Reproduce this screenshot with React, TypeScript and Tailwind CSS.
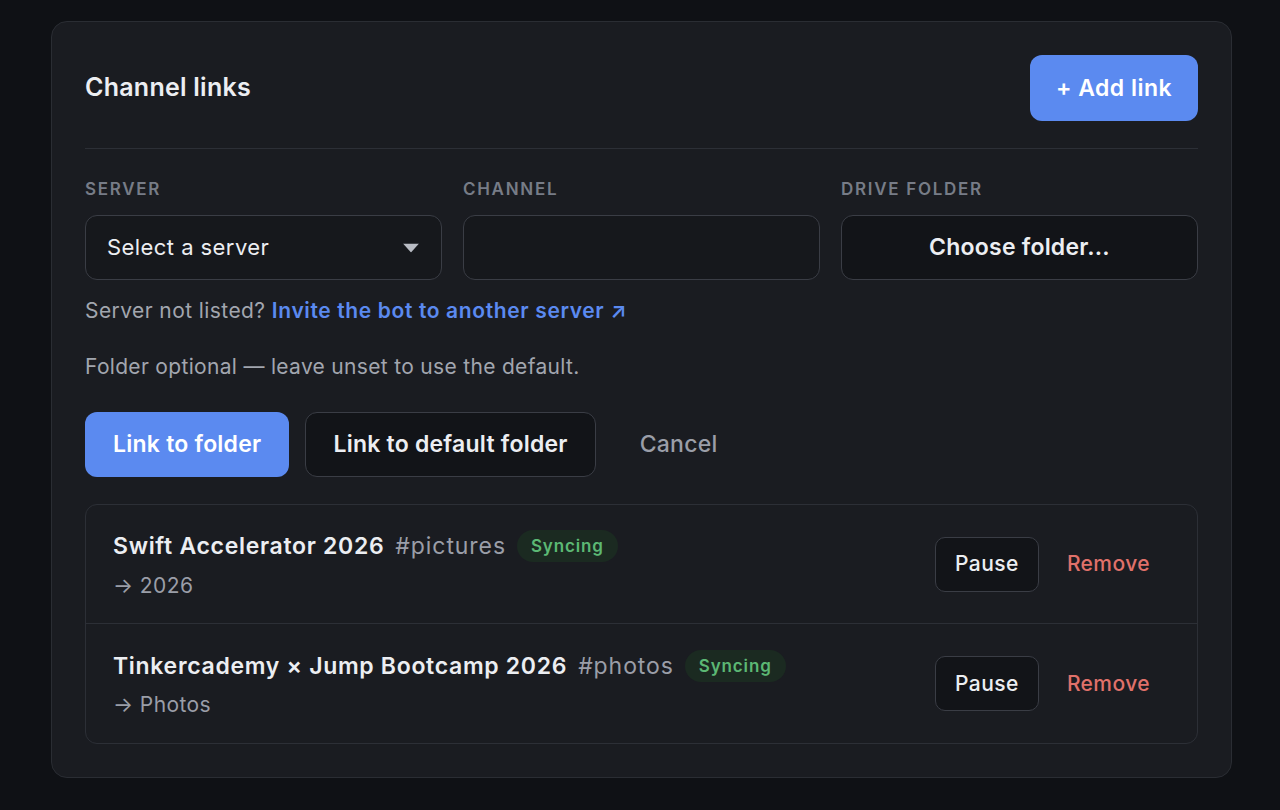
import { useState } from "react"

type Link = {
  server: string
  channel: string
  folder: string
}

const links: Link[] = [
  { server: "Swift Accelerator 2026", channel: "#pictures", folder: "2026" },
  { server: "Tinkercademy × Jump Bootcamp 2026", channel: "#photos", folder: "Photos" },
]

function Label({ children }: { children: React.ReactNode }) {
  return (
    <div className="mb-[17px] text-[17px] font-semibold uppercase leading-none tracking-[0.1em] text-[#777c87]">
      {children}
    </div>
  )
}

function LinkRow({ link, last }: { link: Link; last: boolean }) {
  return (
    <div
      className={`flex h-[119px] items-center justify-between pl-[27px] pr-[47px] ${
        last ? "" : "border-b border-[#2c2f36]"
      }`}
    >
      <div className="flex flex-col gap-[6px] pt-[2px]">
        <div className="flex items-center gap-[11px]">
          <span className="text-[23px] font-semibold tracking-[0.03em] text-[#eceef2]">{link.server}</span>
          <span className="text-[23px] tracking-[0.04em] text-[#9a9ea8]">{link.channel}</span>
          <span className="rounded-full bg-[#1b2a21] px-[14px] py-[5px] text-[17px] font-semibold leading-[22px] tracking-[0.05em] text-[#5cb874]">
            Syncing
          </span>
        </div>
        <div className="text-[21px] tracking-[0.02em] text-[#9a9ea8]">→ {link.folder}</div>
      </div>
      <div className="flex items-center gap-[28px]">
        <button className="h-[55px] w-[104px] rounded-[10px] border border-[#3a3d45] bg-[#121418] text-[21px] font-medium tracking-[0.02em] text-[#eceef2]">
          Pause
        </button>
        <button className="text-[21px] font-medium tracking-[0.02em] text-[#e0716a]">Remove</button>
      </div>
    </div>
  )
}

export default function App() {
  const [server, setServer] = useState("")

  return (
    <div
      className="min-h-[810px] bg-[#0f1115] pl-[51px] pr-[48px] pt-[21px]"
      style={{ fontFamily: "Inter, 'Noto Sans', sans-serif" }}
    >
      <div className="rounded-[16px] border border-[#2a2d33] bg-[#1a1c21] px-[33px] pb-[33px] pt-[33px]">
        <div className="flex items-center justify-between border-b border-[#2c2f36] pb-[27px]">
          <h2 className="text-[25px] font-semibold tracking-[0.01em] text-[#eceef2]">Channel links</h2>
          <button className="h-[66px] w-[168px] rounded-[12px] bg-[#5b8af0] text-[23px] font-semibold tracking-[0.02em] text-white">
            + Add link
          </button>
        </div>

        <div className="mt-[32px] grid grid-cols-3 gap-[21px]">
          <div>
            <Label>Server</Label>
            <div className="relative">
              <select
                value={server}
                onChange={(e) => setServer(e.target.value)}
                className="h-[65px] w-full appearance-none rounded-[12px] border border-[#3a3d45] bg-[#16181c] px-[21px] text-[22px] tracking-[0.02em] text-[#eceef2] outline-none"
              >
                <option value="">Select a server</option>
              </select>
              <svg
                className="pointer-events-none absolute right-[23px] top-1/2 -translate-y-1/2"
                width="16"
                height="9"
                viewBox="0 0 16 9"
              >
                <path d="M0 0h16L8 9z" fill="#b9bcc4" />
              </svg>
            </div>
          </div>
          <div>
            <Label>Channel</Label>
            <input className="h-[65px] w-full rounded-[12px] border border-[#3a3d45] bg-[#16181c] px-[21px] text-[22px] text-[#eceef2] outline-none" />
          </div>
          <div>
            <Label>Drive folder</Label>
            <button className="h-[65px] w-full rounded-[12px] border border-[#3a3d45] bg-[#121418] text-[23px] font-semibold tracking-[0.01em] text-[#eceef2]">
              Choose folder...
            </button>
          </div>
        </div>

        <p className="mt-[15px] text-[21px] tracking-[0.02em] text-[#a2a6af]">
          Server not listed?{" "}
          <a className="font-semibold tracking-[0.03em] text-[#5b8af0]">Invite the bot to another server ↗</a>
        </p>
        <p className="mt-[24px] text-[21px] tracking-[0.015em] text-[#a2a6af]">
          Folder optional — leave unset to use the default.
        </p>

        <div className="mt-[30px] flex items-center gap-[16px]">
          <button className="h-[65px] rounded-[12px] bg-[#5b8af0] px-[28px] text-[23px] font-semibold tracking-[0.01em] text-white">
            Link to folder
          </button>
          <button className="h-[65px] rounded-[12px] border border-[#3a3d45] bg-[#121418] px-[27px] text-[23px] font-semibold tracking-[0.01em] text-[#eceef2]">
            Link to default folder
          </button>
          <button className="px-[28px] text-[23px] font-medium tracking-[0.01em] text-[#9a9ea8]">Cancel</button>
        </div>

        <div className="mt-[27px] rounded-[12px] border border-[#2c2f36]">
          {links.map((l, i) => (
            <LinkRow key={l.server} link={l} last={i === links.length - 1} />
          ))}
        </div>
      </div>
    </div>
  )
}
